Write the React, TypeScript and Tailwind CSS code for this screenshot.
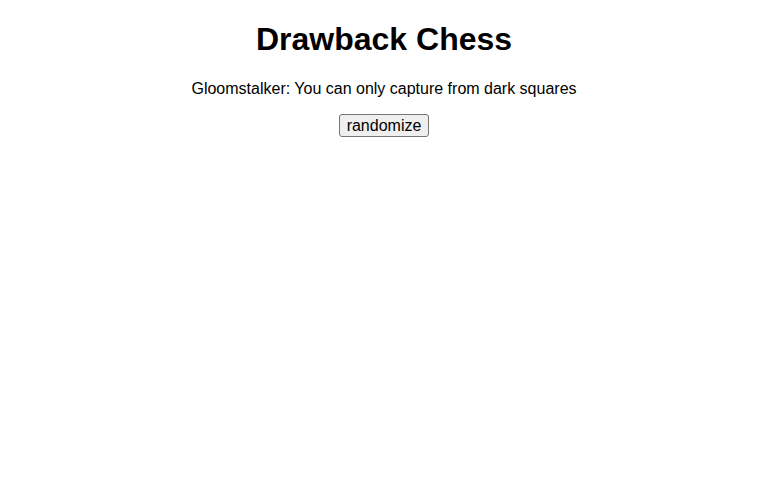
export default function App() {
	return (
		<div className="min-h-screen bg-white text-center text-black font-['Liberation_Sans',Arial,sans-serif]">
			<h1 className="pt-[21px] text-[32px] font-bold leading-[37px]">Drawback Chess</h1>
			<p className="mt-[22px] text-base leading-[18px]">
				Gloomstalker: You can only capture from dark squares
			</p>
			<button
				type="button"
				className="mt-[16px] px-[7px] py-[1px] border border-[#767676] rounded-[3px] bg-[#efefef] text-base leading-[19px] text-black hover:bg-[#e5e5e5]"
			>
				randomize
			</button>
		</div>
	);
}
